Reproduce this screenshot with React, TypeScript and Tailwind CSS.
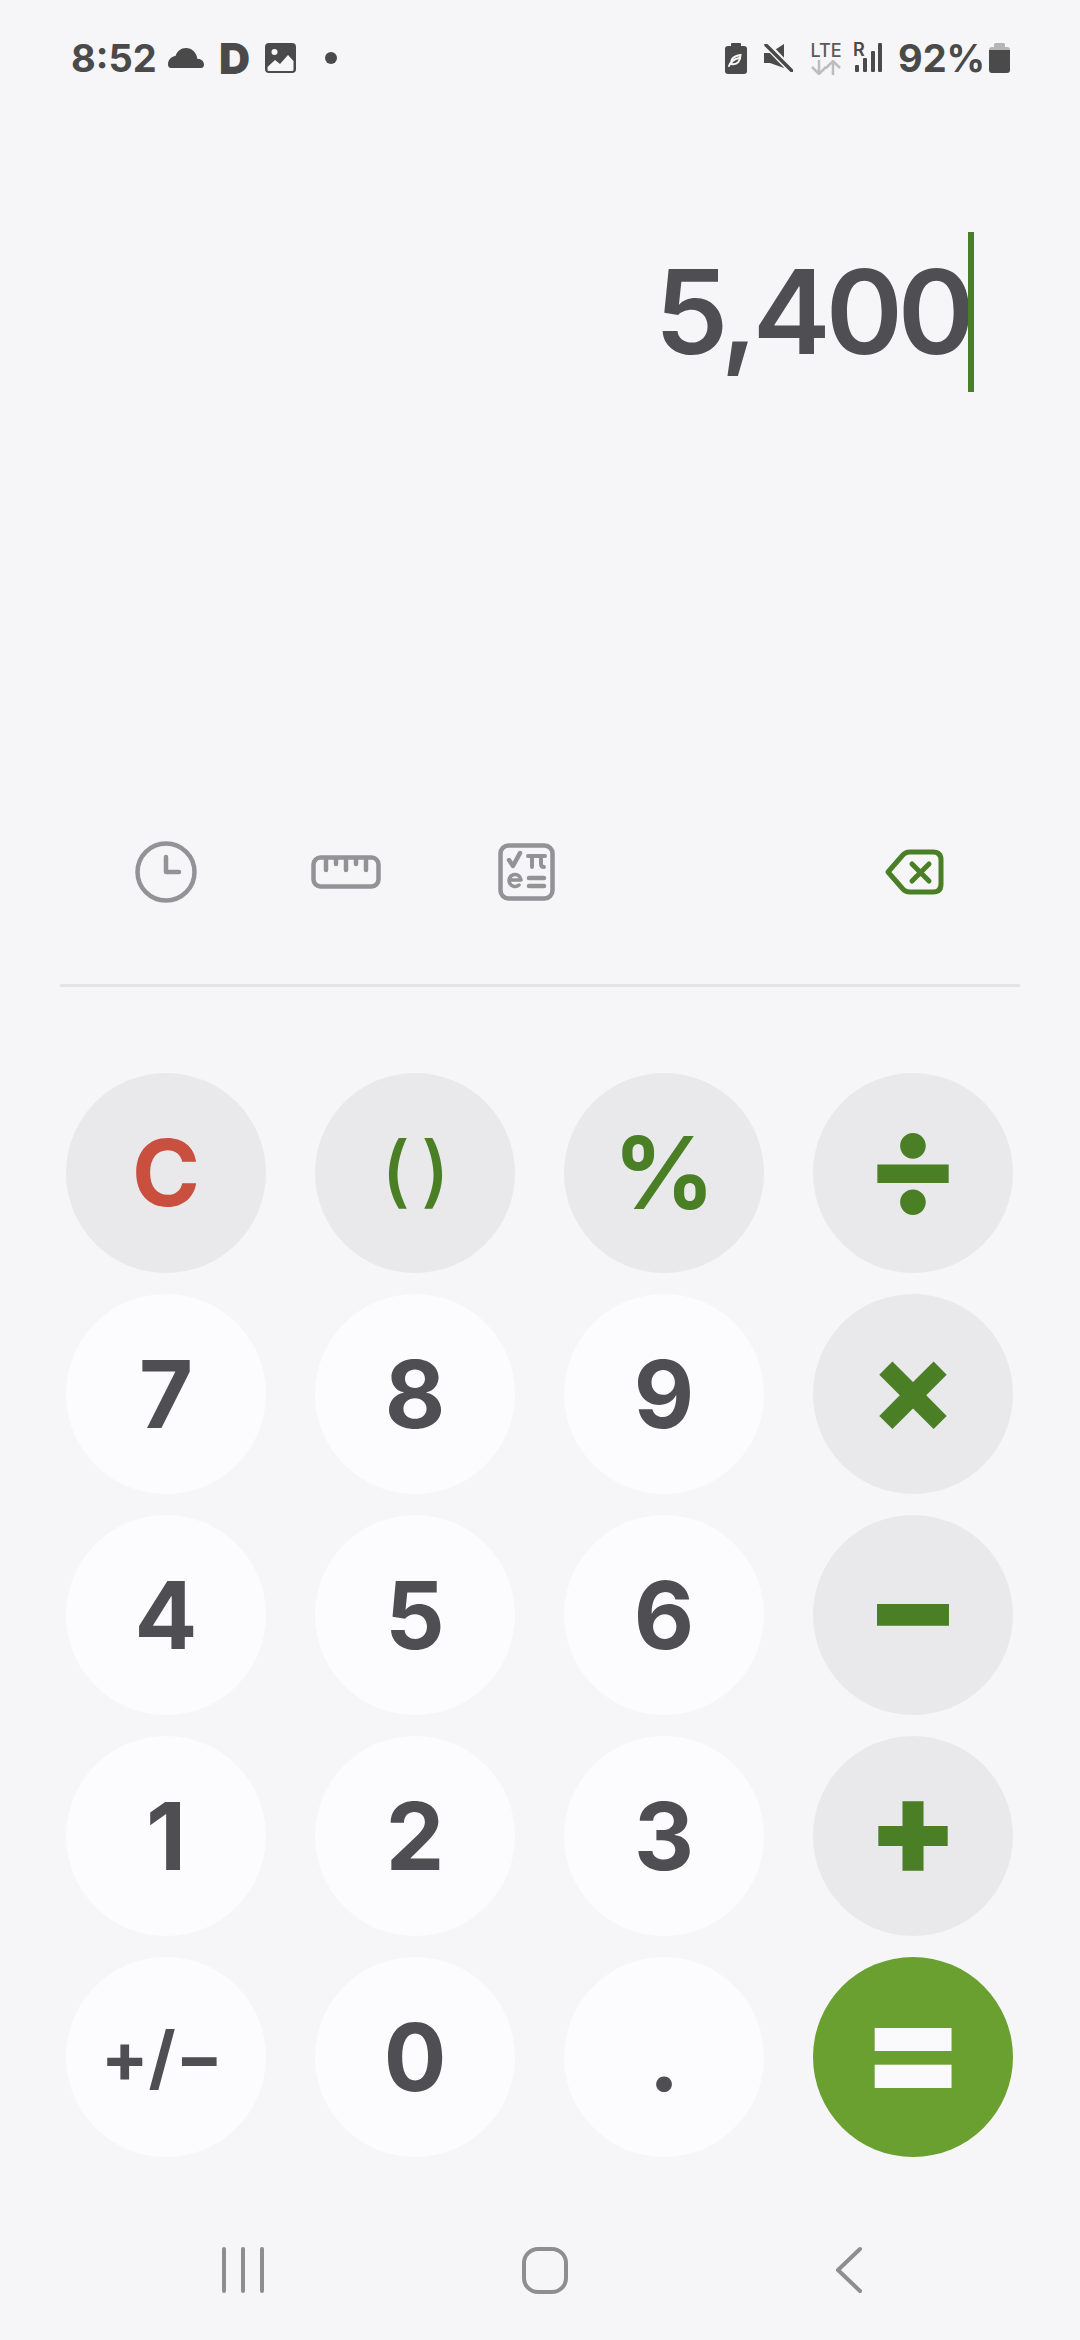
import React from "react";

type K = { t: string; bg: string; cl: string };
const G = "bg-[#e9e9eb]";
const W = "bg-[#fcfcfe]";
const dark = "text-[#4e4e53] text-[93px] font-bold";
const keys: K[] = [
  { t: "C", bg: G, cl: "text-[#c94f3e] text-[92px] font-bold" },
  { t: "( )", bg: G, cl: "text-[#4a7f26] text-[78px] font-medium tracking-[-5px] pb-[6px] pr-[4px]" },
  { t: "%", bg: G, cl: "text-[#4a7f26] text-[100px] font-bold" },
  { t: "÷", bg: G, cl: "text-[#4a7f26] text-[140px] font-extrabold pb-[18px]" },
  { t: "7", bg: W, cl: dark },
  { t: "8", bg: W, cl: dark },
  { t: "9", bg: W, cl: dark },
  { t: "×", bg: G, cl: "text-[#4a7f26] text-[126px] font-extrabold pb-[16px]" },
  { t: "4", bg: W, cl: dark },
  { t: "5", bg: W, cl: dark },
  { t: "6", bg: W, cl: dark },
  { t: "−", bg: G, cl: "text-[#4a7f26] text-[137px] font-black pb-[20px]" },
  { t: "1", bg: W, cl: dark },
  { t: "2", bg: W, cl: dark },
  { t: "3", bg: W, cl: dark },
  { t: "+", bg: G, cl: "text-[#4a7f26] text-[132px] font-black pb-[18px]" },
  { t: "+/−", bg: W, cl: "text-[#4e4e53] text-[70px] font-bold pr-[8px]" },
  { t: "0", bg: W, cl: dark },
  { t: ".", bg: W, cl: dark },
  { t: "=", bg: "bg-[#6aa030]", cl: "text-[#fafafc] text-[146px] font-black pb-[18px]" },
];

const Cloud = () => (
  <svg width="36" height="20" viewBox="0 0 36 20" fill="#4a4a4a"><path d="M3 20h30c2 0 3-1.500 3-3.500 0-3-2.500-5.500-5.500-5.500h-1C28.500 4.500 24 0 18 0c-5 0-9 3-10.500 8C3 8.500 0 12 0 16.500 0 18.500 1 20 3 20z" /></svg>
);
const Pic = () => (
  <svg width="31" height="30" viewBox="0 0 31 30"><rect width="31" height="30" rx="4" fill="#4a4a4a" /><circle cx="9.500" cy="9" r="3" fill="#f6f6f8" /><path d="M2.500 24l7.500-7 5 4 8-9 5.500 6v8.500a1.500 1.500 0 0 1-1.500 1.500H4a1.500 1.500 0 0 1-1.500-1.500z" fill="#f6f6f8" /></svg>
);
const EcoBat = () => (
  <svg width="22" height="31" viewBox="0 0 22 31"><rect x="6" width="10" height="4" rx="1" fill="#4a4a4a" /><rect y="3" width="22" height="28" rx="3" fill="#4a4a4a" /><path d="M4 23c2-5 6-7 10-8M6.500 21c-1-5 2-8 9-9 0 6-3 10-9 9z" fill="none" stroke="#f6f6f8" strokeWidth="2" strokeLinecap="round" /></svg>
);
const Mute = () => (
  <svg width="29" height="28" viewBox="0 0 29 28"><path d="M0 9h6l14-9v24L6 19H0z" fill="#4a4a4a" /><path d="M2 0l26 27" stroke="#f6f6f8" strokeWidth="7" /><path d="M2 1l26 26" stroke="#4a4a4a" strokeWidth="3.500" strokeLinecap="round" /></svg>
);
const Arrows = () => (
  <svg width="32" height="15" viewBox="0 0 32 15" fill="none" stroke="#bdbdbd" strokeWidth="2.500"><path d="M9 0v13M2 7l7 7 7-7M23 15V2M16 8l7-7 7 7" /></svg>
);
const Signal = () => (
  <svg width="27" height="29" viewBox="0 0 27 29" fill="#4a4a4a"><rect x="0" y="22" width="4" height="7" rx="1" /><rect x="8" y="15" width="4" height="14" rx="1" /><rect x="16" y="8" width="4" height="21" rx="1" fill="#4a4a4a" /><rect x="23" y="0" width="4" height="29" rx="1" /></svg>
);
const Bat = () => (
  <svg width="21" height="30" viewBox="0 0 21 30"><path d="M5 4V1.500A1.500 1.500 0 0 1 6.500 0h8A1.500 1.500 0 0 1 16 1.500V4h2a3 3 0 0 1 3 3v3H0V7a3 3 0 0 1 3-3z" fill="#b5b5b5" /><path d="M0 7h21v20a3 3 0 0 1-3 3H3a3 3 0 0 1-3-3z" fill="#4a4a4a" /></svg>
);

const Clock = () => (
  <svg width="62" height="62" viewBox="0 0 62 62" fill="none" stroke="#939397" strokeWidth="4.500" strokeLinecap="round" strokeLinejoin="round"><circle cx="31" cy="31" r="28.500" /><path d="M31 16v15h13" /></svg>
);
const Ruler = () => (
  <svg width="70" height="34" viewBox="0 0 70 34" fill="none" stroke="#939397" strokeWidth="4.500" strokeLinecap="round" strokeLinejoin="round"><rect x="2.500" y="2.500" width="65" height="29" rx="7" /><path d="M15 3v12M25 3v6M35 3v12M45 3v6M55 3v12" /></svg>
);
const Sci = () => (
  <svg width="57" height="58" viewBox="0 0 57 58" fill="none" stroke="#939397" strokeLinecap="round" strokeLinejoin="round"><rect x="2.500" y="2.500" width="52" height="53" rx="8" strokeWidth="4.500" /><path d="M11 17l4 6 7-13" strokeWidth="4.500" /><path d="M30 13h17M34 13v11M43 13v8q0 3 3 3" strokeWidth="4" /><path d="M11 37h12a6 6 0 1 0-2 5" strokeWidth="3.500" /><path d="M31 35h15M31 43h15" strokeWidth="4.500" /></svg>
);
const Back = () => (
  <svg width="60" height="46" viewBox="0 0 60 46" fill="none" stroke="#4a7f26" strokeWidth="5" strokeLinecap="round" strokeLinejoin="round"><path d="M4 23L18 7q3-4 8-4h23q8 0 8 8v24q0 8-8 8H26q-5 0-8-4z" /><path d="M28 15l17 17M45 15L28 32" /></svg>
);

const Tool = ({ children }: { children: React.ReactNode }) => (
  <div className="w-[180px] flex items-center justify-center">{children}</div>
);

export default function App() {
  return (
    <div className="w-[1080px] h-[2340px] bg-[#f6f6f8] flex flex-col font-['Inter',sans-serif] overflow-hidden">
      {/* status bar */}
      <div className="h-[116px] pl-[71px] pr-[70px] flex items-start justify-between pt-[38px] text-[#4a4a4a]">
        <div className="flex items-center h-[40px]">
          <span className="text-[38px] leading-[40px] font-bold w-[97px]">8:52</span>
          <Cloud />
          <span className="text-[43px] leading-[40px] font-black ml-[15px] w-[46px]">D</span>
          <Pic />
          <div className="ml-[29px] w-[12px] h-[12px] rounded-full bg-[#4a4a4a]" />
        </div>
        <div className="flex items-center h-[40px]">
          <EcoBat />
          <div className="ml-[17px]"><Mute /></div>
          <div className="ml-[17px] flex flex-col items-center w-[32px]">
            <span className="text-[18px] leading-[18px] font-medium text-[#5a5a5a]">LTE</span>
            <Arrows />
          </div>
          <div className="ml-[11px] relative w-[29px] h-[30px]">
            <span className="absolute left-0 top-[-2px] text-[18px] leading-[18px] font-semibold">R</span>
            <div className="absolute left-[2px] top-0"><Signal /></div>
          </div>
          <span className="ml-[16px] text-[38px] leading-[40px] font-bold w-[91px]">92%</span>
          <Bat />
        </div>
      </div>

      {/* display */}
      <div className="h-[704px] flex justify-end items-start pt-[116px] pr-[106px]">
        <div className="flex items-start">
          <span className="text-[117px] leading-[160px] font-[560] text-[#4e4e53] tracking-[-5px]">5,400</span>
          <div className="w-[6px] h-[160px] -ml-[2px] bg-[#4a7f26]" />
        </div>
      </div>

      {/* toolbar */}
      <div className="h-[104px] px-[76px] flex items-center justify-between">
        <div className="flex">
          <Tool><Clock /></Tool>
          <Tool><Ruler /></Tool>
          <Tool><Sci /></Tool>
        </div>
        <Tool><Back /></Tool>
      </div>

      <div className="mt-[60px] mx-[60px] h-[3px] bg-[#e4e4e6]" />

      {/* keypad */}
      <div className="mt-[86px] pl-[66px] grid grid-cols-[repeat(4,200px)] auto-rows-[200px] gap-x-[49px] gap-y-[21px]">
        {keys.map((k, i) => (
          <div key={i} className={`rounded-full flex items-center justify-center leading-none ${k.bg} ${k.cl}`}>
            {k.t}
          </div>
        ))}
      </div>

      {/* nav bar */}
      <div className="mt-[89px] h-[48px] flex items-center">
        <div className="ml-[222px] flex gap-[15px]">
          <div className="w-[4px] h-[46px] rounded-full bg-[#8e8e90]" />
          <div className="w-[4px] h-[46px] rounded-full bg-[#8e8e90]" />
          <div className="w-[4px] h-[46px] rounded-full bg-[#8e8e90]" />
        </div>
        <div className="ml-[258px] w-[46px] h-[47px] rounded-[16px] border-[4px] border-[#8e8e90]" />
        <svg className="ml-[267px]" width="28" height="48" viewBox="0 0 28 48" fill="none" stroke="#8e8e90" strokeWidth="4" strokeLinecap="round" strokeLinejoin="round"><path d="M25 3L3 24l22 21" /></svg>
      </div>
    </div>
  );
}
